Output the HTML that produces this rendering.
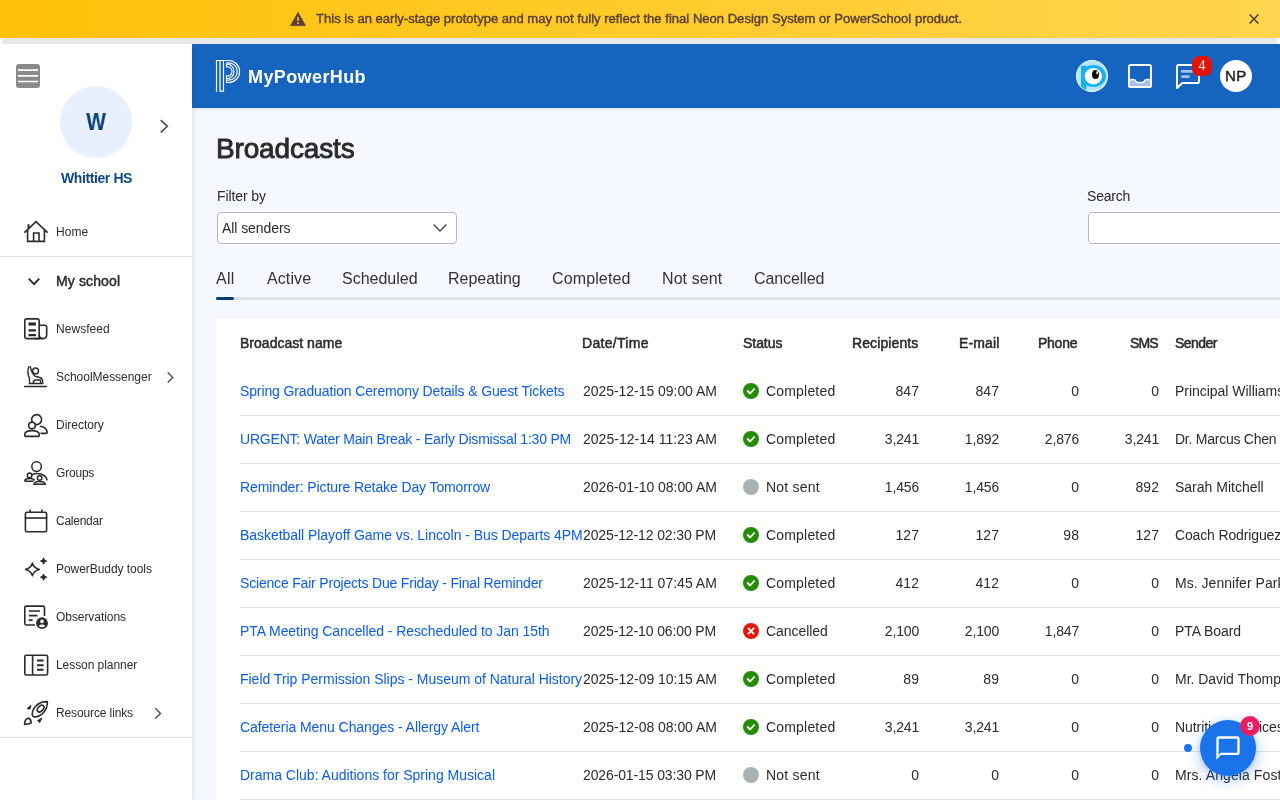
<!DOCTYPE html>
<html lang="en">
<head>
<meta charset="utf-8">
<title>Broadcasts</title>
<style>
*{box-sizing:border-box;margin:0;padding:0}
html,body{width:1280px;height:800px;overflow:hidden}
body{font-family:"Liberation Sans",sans-serif;background:#f5f8fe;color:#2b2b2b;position:relative}
.abs{position:absolute}
.t{position:absolute;white-space:nowrap}
.t,.num,.g{will-change:transform}
#banner{position:absolute;left:0;top:0;width:1280px;height:38px;background:linear-gradient(90deg,#ffc107 0%,#ffd54f 100%);z-index:5}
#bshadow{position:absolute;left:0;top:38px;width:1280px;height:6px;background:linear-gradient(90deg,#fff 0,rgba(255,255,255,0) 5px,rgba(255,255,255,0) 1275px,rgba(255,255,255,.9) 1280px),linear-gradient(180deg,#e4e6ee 0,#e8e8e8 2px,#e9e9e9 100%);z-index:4}
#side{position:absolute;left:0;top:44px;width:192px;height:756px;background:#fff;z-index:3;box-shadow:2px 0 5px rgba(20,40,80,.09)}
.hr{position:absolute;left:0;width:192px;height:1px;background:#dde3e4}
#hdr{position:absolute;left:192px;top:44px;width:1088px;height:64px;background:#1565c0;z-index:2;box-shadow:0 1px 3px rgba(20,40,80,.10)}
#main{position:absolute;left:192px;top:108px;width:1088px;height:692px;background:#f5f8fe}
.field{position:absolute;height:32px;background:#fff;border:1px solid #b2b8bb;border-radius:4px}
#tabline{position:absolute;left:24px;top:189px;width:1064px;height:3px;background:#dde1e3}
#tabact{position:absolute;left:24px;top:189px;width:18px;height:3px;background:#003b7a;border-radius:1.5px}
#card{position:absolute;left:24px;top:211px;width:1064px;height:481px;background:#fff;overflow:hidden}
.sep{position:absolute;left:24px;width:1040px;height:1px;background:#dfe2e4}
.dot{position:absolute;left:527px;width:16px;height:16px}
.num{position:absolute;width:100px;text-align:right;font-size:14px;line-height:18px;color:#2b2b2b;white-space:nowrap}
</style>
</head>
<body>
<div id="banner">
  <svg class="abs" style="left:290px;top:11px" width="16" height="16" viewBox="0 0 16 16"><path d="M8 1.6 L15.4 14.6 H0.6 Z" fill="#5d4037" stroke="#5d4037" stroke-width="0.8" stroke-linejoin="round"/><rect x="7.2" y="6" width="1.6" height="4" fill="#ffc61c"/><rect x="7.2" y="11.2" width="1.6" height="1.7" fill="#ffc61c"/></svg>
  <div class="t" style="left:316px;top:10px;font-size:13px;font-weight:normal;-webkit-text-stroke:0.45px currentColor;line-height:17px;color:#5d4037;letter-spacing:0.027px;">This is an early-stage prototype and may not fully reflect the final Neon Design System or PowerSchool product.</div>
  <svg class="abs" style="left:1248px;top:13px" width="12" height="12" viewBox="0 0 12 12"><path d="M1.6 1.6 L10.4 10.4 M10.4 1.6 L1.6 10.4" stroke="#4a3430" stroke-width="1.4" fill="none"/></svg>
</div>
<div id="bshadow"></div>

<div id="side">
  <svg class="abs" style="left:16px;top:20px" width="24" height="24" viewBox="0 0 24 24"><rect x="0" y="0" width="24" height="24" rx="3" fill="#8a8a8a"/><path d="M2 6.1 H22 M2 11.8 H22 M2 17.5 H22" stroke="#fff" stroke-width="1.7"/></svg>
  <div class="abs" style="left:60px;top:42px;width:72px;height:72px;border-radius:50%;background:#e8f0fe"></div>
  <svg class="abs" style="left:156px;top:72px" width="16" height="20" viewBox="0 0 16 20"><path d="M4.8 4.2 L11.3 10.3 L4.8 16.4" stroke="#454b50" stroke-width="1.6" fill="none"/></svg>
  <div class="hr" style="top:212px"></div>
  <div class="hr" style="top:693px"></div>
  <!-- icons: each svg 28x28 placed at x=22, y = centre-14-44 -->
  <svg class="abs ic" style="left:22px;top:174px" width="28" height="28" viewBox="0 0 28 28" fill="none" stroke="#2b2b2b" stroke-width="1.6"><path d="M2.4 14.6 L14 3.6 L25.6 14.6"/><path d="M5.6 12 V23.4 H22.4 V12"/><path d="M11.6 23.4 V15 H17 V23.4"/><path d="M6.5 10.8 V6.2" stroke-width="2"/></svg>
  <svg class="abs" style="left:26px;top:229px" width="16" height="16" viewBox="0 0 16 16"><path d="M2.7 5.7 L8 11.2 L13.3 5.7" stroke="#2b2b2b" stroke-width="1.9" fill="none"/></svg>
  <svg class="abs ic" style="left:22px;top:271px" width="28" height="28" viewBox="0 0 28 28" fill="none" stroke="#2b2b2b" stroke-width="1.6"><path d="M4.8 3.9 H15.2 Q17.2 3.9 17.2 5.9 V23.6 H4.8 Q2.8 23.6 2.8 21.6 V5.9 Q2.8 3.9 4.8 3.9 Z"/><path d="M17.2 19.6 Q17.2 23.6 21 23.6 Q24.7 23.6 24.7 19.6 V12.3 Q24.7 10.2 22.6 10.2 H17.2"/><path d="M12 23.6 H21"/><path d="M6.5 9 H13.9" stroke-width="3.1"/><path d="M6.5 15.4 H13.9 M6.5 20.1 H13.9" stroke-width="2.1"/></svg>
  <svg class="abs ic" style="left:22px;top:319px" width="28" height="28" viewBox="0 0 28 28" fill="none" stroke="#2b2b2b" stroke-width="1.4"><circle cx="13.6" cy="7.9" r="2.9"/><path d="M7 3.2 Q4.5 9 7.5 15.5 V20.5 H20.7 V18.5 Q20.5 14.8 17 14.2 L13 13.2 Q9.5 10 8.2 3.2"/><path d="M11.2 20.2 Q11.2 17.2 14 17 H18.2 Q18.8 18.6 18.6 20.2"/><path d="M2 23.5 H25" stroke-width="1.5"/></svg>
  <svg class="abs ic" style="left:22px;top:367px" width="28" height="28" viewBox="0 0 28 28" fill="none" stroke="#2b2b2b" stroke-width="1.6"><circle cx="14.6" cy="8.6" r="5"/><path d="M17.8 15.2 Q24.6 16 25.2 21.2 Q25.2 22.4 24 22.4 H18.5"/><circle cx="10" cy="14.6" r="3.3" fill="#fff"/><path d="M2.8 24.6 V23.4 Q3 19.6 10 19.6 Q17 19.6 17.2 23.4 V24.6 Q17.2 25.4 16.4 25.4 H3.6 Q2.8 25.4 2.8 24.6 Z" fill="#fff"/></svg>
  <svg class="abs ic" style="left:22px;top:415px" width="28" height="28" viewBox="0 0 28 28" fill="none" stroke="#2b2b2b" stroke-width="1.5"><circle cx="14.6" cy="7.6" r="4.8"/><path d="M10 15.6 Q14 13.8 18.6 15 Q24.4 16.6 25.2 21.4"/><circle cx="7.6" cy="16.4" r="2.3" fill="#fff"/><path d="M2.6 22.2 Q3 19.6 7.6 19.6 Q11.6 19.6 12.4 21.4 M2.6 22.2 H11.6"/><circle cx="17.6" cy="19" r="2.3" fill="#fff"/><path d="M12 25.2 Q12.4 22.4 17.6 22.4 Q22.8 22.4 23.2 25.2 Z" fill="#fff"/></svg>
  <svg class="abs ic" style="left:22px;top:463px" width="28" height="28" viewBox="0 0 28 28" fill="none" stroke="#2b2b2b" stroke-width="1.6"><rect x="3.4" y="5.2" width="21.2" height="19.6" rx="1.6"/><path d="M3.4 11 H24.6"/><path d="M8.2 2.4 V5.2 M19.8 2.4 V5.2"/></svg>
  <svg class="abs ic" style="left:22px;top:511px" width="28" height="28" viewBox="0 0 28 28" fill="none" stroke="#2b2b2b" stroke-width="1.5" stroke-linejoin="round"><path d="M10.4 8 Q11.6 13 17.4 14.4 Q11.6 15.8 10.4 20.8 Q9.2 15.8 3.4 14.4 Q9.2 13 10.4 8 Z"/><path d="M21.6 2.8 Q22 5.6 24.8 6 Q22 6.4 21.6 9.2 Q21.2 6.4 18.4 6 Q21.2 5.6 21.6 2.8 Z" fill="#2b2b2b" stroke-width="0.9"/><path d="M21.6 19 Q22 21.8 24.8 22.2 Q22 22.6 21.6 25.4 Q21.2 22.6 18.4 22.2 Q21.2 21.8 21.6 19 Z" fill="#2b2b2b" stroke-width="0.9"/></svg>
  <svg class="abs ic" style="left:22px;top:559px" width="28" height="28" viewBox="0 0 28 28" fill="none" stroke="#2b2b2b" stroke-width="1.6"><path d="M13 22 H4.4 Q2.8 22 2.8 20.4 V4.7 Q2.8 3.1 4.4 3.1 H20.9 Q22.5 3.1 22.5 4.7 V13"/><path d="M6.8 8 H18 M6.8 12.6 H15.4 M6.8 17.2 H10.6" stroke-width="1.7"/><circle cx="20" cy="20.2" r="6.9" fill="#fff" stroke="none"/><circle cx="20" cy="20.2" r="5.9" fill="#2b2b2b" stroke="none"/><circle cx="20" cy="18.4" r="1.8" fill="#fff" stroke="none"/><path d="M16.6 23 Q20 20.2 23.4 23 Q20 25.6 16.6 23 Z" fill="#fff" stroke="none"/></svg>
  <svg class="abs ic" style="left:22px;top:607px" width="28" height="28" viewBox="0 0 28 28" fill="none" stroke="#2b2b2b" stroke-width="1.6"><rect x="2.8" y="4.2" width="22.8" height="19.8" rx="1.6"/><path d="M10.6 4.2 V24"/><path d="M15 9.6 H21.6 M15 14.2 H21.6 M15 18.8 H21.6" stroke-width="2"/></svg>
  <svg class="abs ic" style="left:22px;top:655px" width="28" height="28" viewBox="0 0 28 28" fill="none" stroke="#2b2b2b" stroke-width="1.6" stroke-linejoin="round"><path d="M25.4 2.6 Q17.4 2.4 12.8 8.2 Q9.4 12.6 10.6 16.6 Q11 17.4 11.8 17.6 Q16 18.6 20 15.2 Q25.6 10.4 25.4 2.6 Z"/><ellipse cx="18.6" cy="9.6" rx="4" ry="2.5" transform="rotate(-45 18.6 9.6)"/><path d="M2.6 25.4 Q2.6 20 6.6 19 Q9.6 21 9 24 Q6 25.4 2.6 25.4 Z"/><path d="M5 9.6 L9 6.4 L8 10 Z" fill="#2b2b2b" stroke-width="1"/><path d="M15.6 21.6 L20 19 L17.6 23.6 Z" fill="#2b2b2b" stroke-width="1"/></svg>
  <svg class="abs" style="left:162px;top:325px" width="16" height="16" viewBox="0 0 16 16"><path d="M5.7 3.5 L10.7 8.5 L5.7 13.5" stroke="#454b50" stroke-width="1.4" fill="none"/></svg>
  <svg class="abs" style="left:150px;top:661px" width="16" height="16" viewBox="0 0 16 16"><path d="M5.3 3.2 L10.5 8.4 L5.3 13.6" stroke="#454b50" stroke-width="1.4" fill="none"/></svg>

  <div class="t" style="left:56px;top:180px;font-size:12px;font-weight:normal;line-height:16px;color:#2b2b2b;letter-spacing:0.033px;">Home</div>
  <div class="t" style="left:56px;top:277px;font-size:12px;font-weight:normal;line-height:16px;color:#2b2b2b;letter-spacing:0.057px;">Newsfeed</div>
  <div class="t" style="left:56px;top:325px;font-size:12px;font-weight:normal;line-height:16px;color:#2b2b2b;letter-spacing:-0.029px;">SchoolMessenger</div>
  <div class="t" style="left:56px;top:373px;font-size:12px;font-weight:normal;line-height:16px;color:#2b2b2b;letter-spacing:-0.025px;">Directory</div>
  <div class="t" style="left:56px;top:421px;font-size:12px;font-weight:normal;line-height:16px;color:#2b2b2b;letter-spacing:-0.2px;">Groups</div>
  <div class="t" style="left:56px;top:469px;font-size:12px;font-weight:normal;line-height:16px;color:#2b2b2b;letter-spacing:-0.257px;">Calendar</div>
  <div class="t" style="left:56px;top:517px;font-size:12px;font-weight:normal;line-height:16px;color:#2b2b2b;letter-spacing:-0.053px;">PowerBuddy tools</div>
  <div class="t" style="left:56px;top:565px;font-size:12px;font-weight:normal;line-height:16px;color:#2b2b2b;letter-spacing:-0.064px;">Observations</div>
  <div class="t" style="left:56px;top:613px;font-size:12px;font-weight:normal;line-height:16px;color:#2b2b2b;letter-spacing:-0.062px;">Lesson planner</div>
  <div class="t" style="left:56px;top:661px;font-size:12px;font-weight:normal;line-height:16px;color:#2b2b2b;letter-spacing:-0.123px;">Resource links</div>
  <div class="t" style="left:56px;top:228px;font-size:14px;font-weight:normal;-webkit-text-stroke:0.45px currentColor;line-height:18px;color:#2b2b2b;letter-spacing:0.125px;">My school</div>
  <div class="t" style="left:61px;top:125px;font-size:14px;font-weight:bold;line-height:18px;color:#0d4786;letter-spacing:-0.4px;">Whittier HS</div>
  <div class="abs g" style="left:60px;top:63px;width:72px;text-align:center;font-size:24px;line-height:30px;font-weight:bold;color:#0d3f7a;transform:scaleX(.87)">W</div>
</div>

<div id="hdr">
    <svg class="abs" style="left:23px;top:15px" width="26" height="34" viewBox="0 0 26 34" fill="none" stroke="#fff" stroke-width="1.15"><path d="M1.5 32.8 V1.5 H8.5 V32.1 H5 V1.5"/><path d="M8.5 1.5 H13.6 A11 11 0 0 1 13.6 23.5 H11.5 V21.15 H13.6 A8.65 8.65 0 0 0 13.6 3.85 H11.5"/><path d="M11.5 4.9 V7.9 A4.6 4.6 0 1 1 11.5 16.9 V19.9 A7.5 7.5 0 1 0 11.5 4.9 Z"/></svg>
  <svg class="abs" style="left:883px;top:15px" width="34" height="34" viewBox="0 0 34 34"><defs><clipPath id="pbc"><circle cx="17" cy="17" r="15.2"/></clipPath></defs><circle cx="17" cy="17" r="16" fill="#fff"/><circle cx="17" cy="17" r="15.2" fill="#b3e5fc"/><g clip-path="url(#pbc)"><rect x="6" y="6.7" width="5.4" height="26" fill="#16b1ee"/><ellipse cx="18.5" cy="17" rx="12.5" ry="11" fill="#16b1ee"/></g><ellipse cx="18.4" cy="17.2" rx="8.7" ry="8.2" fill="#fff"/><ellipse cx="20.5" cy="15.5" rx="3.5" ry="4.5" fill="#0a0a0a"/><ellipse cx="22.2" cy="13.7" rx="1" ry="1.6" fill="#fff"/></svg>
  <svg class="abs" style="left:935px;top:19px" width="26" height="26" viewBox="0 0 26 26" fill="none"><path d="M2 16.5 H6.5 Q8 16.5 8.6 18 Q9.2 19.5 10.8 19.5 H15.2 Q16.8 19.5 17.4 18 Q18 16.5 19.5 16.5 H24 V23.4 H2 Z" fill="#a5c3ea"/><rect x="2" y="2" width="22" height="22" rx="1.6" stroke="#fff" stroke-width="2"/><path d="M2 16.5 H6.5 Q8 16.5 8.6 18 Q9.2 19.5 10.8 19.5 H15.2 Q16.8 19.5 17.4 18 Q18 16.5 19.5 16.5 H24" stroke="#fff" stroke-width="1.5"/></svg>
  <svg class="abs" style="left:983px;top:19px" width="26" height="27" viewBox="0 0 26 27" fill="none"><path d="M7.2 8.4 H20" stroke="#a5c3ea" stroke-width="2.6" stroke-linecap="round"/><path d="M7.2 13.6 H13.6" stroke="#a5c3ea" stroke-width="2.6" stroke-linecap="round"/><path d="M3.6 2 H22.4 Q24 2 24 3.6 V18.4 Q24 20 22.4 20 H7.4 L2 25 V3.6 Q2 2 3.6 2 Z" stroke="#fff" stroke-width="2" stroke-linejoin="round"/></svg>
  <div class="abs g" style="left:1000px;top:12px;width:20px;height:20px;border-radius:7px;background:#e11507;color:#fff;font-size:14px;line-height:19px;text-align:center;font-family:'Liberation Serif',serif">4</div>
  <div class="abs" style="left:1028px;top:16px;width:32px;height:32px;border-radius:50%;background:#fff"></div>

  <div class="t" style="left:56px;top:22px;font-size:18px;font-weight:bold;line-height:23px;color:#fff;letter-spacing:0.4px;">MyPowerHub</div>
  <div class="t" style="left:1033px;top:22px;font-size:15px;font-weight:normal;-webkit-text-stroke:0.45px currentColor;line-height:20px;color:#222;letter-spacing:0.5px;">NP</div>
</div>

<div id="main">
  <div class="t" style="left:24px;top:23px;font-size:28px;font-weight:normal;-webkit-text-stroke:0.9px currentColor;line-height:36px;color:#2b2b2b;letter-spacing:-0.156px;">Broadcasts</div>
  <div class="t" style="left:25px;top:79px;font-size:14px;font-weight:normal;line-height:18px;color:#2b2b2b;letter-spacing:-0.112px;">Filter by</div>
  <div class="t" style="left:895px;top:79px;font-size:14px;font-weight:normal;line-height:18px;color:#2b2b2b;letter-spacing:-0.2px;">Search</div>
  <div class="t" style="left:30px;top:111px;font-size:14px;font-weight:normal;line-height:18px;color:#2b2b2b;letter-spacing:-0.07px;z-index:2;">All senders</div>
  <div class="t" style="left:24px;top:160px;font-size:16px;font-weight:normal;line-height:21px;color:#333;letter-spacing:0.25px;">All</div>
  <div class="t" style="left:75px;top:160px;font-size:16px;font-weight:normal;line-height:21px;color:#333;letter-spacing:0.1px;">Active</div>
  <div class="t" style="left:150px;top:160px;font-size:16px;font-weight:normal;line-height:21px;color:#333;letter-spacing:0px;">Scheduled</div>
  <div class="t" style="left:256px;top:160px;font-size:16px;font-weight:normal;line-height:21px;color:#333;letter-spacing:-0.031px;">Repeating</div>
  <div class="t" style="left:360px;top:160px;font-size:16px;font-weight:normal;line-height:21px;color:#333;letter-spacing:0.125px;">Completed</div>
  <div class="t" style="left:470px;top:160px;font-size:16px;font-weight:normal;line-height:21px;color:#333;letter-spacing:0.071px;">Not sent</div>
  <div class="t" style="left:562px;top:160px;font-size:16px;font-weight:normal;line-height:21px;color:#333;letter-spacing:-0.094px;">Cancelled</div>
  <div class="field" style="left:25px;top:104px;width:240px"><svg class="abs" style="left:214px;top:10px" width="16" height="10" viewBox="0 0 16 10"><path d="M1.6 1.5 L8 8 L14.4 1.5" stroke="#454b50" stroke-width="1.4" fill="none"/></svg></div>
  <div class="field" style="left:896px;top:104px;width:240px"></div>
  <div id="tabline"></div><div id="tabact"></div>
  <div id="card">
    <div class="t" style="left:24px;top:15px;font-size:14px;font-weight:normal;-webkit-text-stroke:0.5px currentColor;line-height:18px;color:#2b2b2b;letter-spacing:0.019px;">Broadcast name</div>
    <div class="t" style="left:366px;top:15px;font-size:14px;font-weight:normal;-webkit-text-stroke:0.5px currentColor;line-height:18px;color:#2b2b2b;letter-spacing:0.3px;">Date/Time</div>
    <div class="t" style="left:527px;top:15px;font-size:14px;font-weight:normal;-webkit-text-stroke:0.5px currentColor;line-height:18px;color:#2b2b2b;letter-spacing:-0.05px;">Status</div>
    <div class="t" style="left:636px;top:15px;font-size:14px;font-weight:normal;-webkit-text-stroke:0.5px currentColor;line-height:18px;color:#2b2b2b;letter-spacing:0.111px;">Recipients</div>
    <div class="t" style="left:743px;top:15px;font-size:14px;font-weight:normal;-webkit-text-stroke:0.5px currentColor;line-height:18px;color:#2b2b2b;letter-spacing:0.15px;">E-mail</div>
    <div class="t" style="left:822px;top:15px;font-size:14px;font-weight:normal;-webkit-text-stroke:0.5px currentColor;line-height:18px;color:#2b2b2b;letter-spacing:-0.25px;">Phone</div>
    <div class="t" style="left:914px;top:15px;font-size:14px;font-weight:normal;-webkit-text-stroke:0.5px currentColor;line-height:18px;color:#2b2b2b;letter-spacing:-0.875px;">SMS</div>
    <div class="t" style="left:959px;top:15px;font-size:14px;font-weight:normal;-webkit-text-stroke:0.5px currentColor;line-height:18px;color:#2b2b2b;letter-spacing:-0.55px;">Sender</div>
    <div class="sep" style="top:96px"></div>
    <div class="t" style="left:24px;top:63px;font-size:14px;font-weight:normal;line-height:18px;color:#0c5ce5;letter-spacing:-0.128px;">Spring Graduation Ceremony Details &amp; Guest Tickets</div>
    <div class="t" style="left:367px;top:63px;font-size:14px;font-weight:normal;line-height:18px;color:#2b2b2b;letter-spacing:-0.042px;">2025-12-15 09:00 AM</div>
    <svg class="dot" style="top:64px" viewBox="0 0 16 16"><circle cx="8" cy="8" r="8" fill="#268d00"/><path d="M4.2 7.5 L7.1 10.5 L11.6 5.5" stroke="#fff" stroke-width="1.8" fill="none" stroke-linejoin="miter"/></svg>
    <div class="t" style="left:550px;top:63px;font-size:14px;font-weight:normal;line-height:18px;color:#2b2b2b;letter-spacing:0.188px;">Completed</div>
    <div class="num" style="left:603px;top:63px;letter-spacing:0.07px">847</div>
    <div class="num" style="left:683px;top:63px;letter-spacing:0.07px">847</div>
    <div class="num" style="left:763px;top:63px;letter-spacing:0.07px">0</div>
    <div class="num" style="left:843px;top:63px;letter-spacing:0.07px">0</div>
    <div class="t" style="left:959px;top:63px;font-size:14px;font-weight:normal;line-height:18px;color:#2b2b2b;letter-spacing:-0.029px;">Principal Williams</div>
    <div class="sep" style="top:144px"></div>
    <div class="t" style="left:24px;top:111px;font-size:14px;font-weight:normal;line-height:18px;color:#0c5ce5;letter-spacing:-0.199px;">URGENT: Water Main Break - Early Dismissal 1:30 PM</div>
    <div class="t" style="left:367px;top:111px;font-size:14px;font-weight:normal;line-height:18px;color:#2b2b2b;letter-spacing:0.014px;">2025-12-14 11:23 AM</div>
    <svg class="dot" style="top:112px" viewBox="0 0 16 16"><circle cx="8" cy="8" r="8" fill="#268d00"/><path d="M4.2 7.5 L7.1 10.5 L11.6 5.5" stroke="#fff" stroke-width="1.8" fill="none" stroke-linejoin="miter"/></svg>
    <div class="t" style="left:550px;top:111px;font-size:14px;font-weight:normal;line-height:18px;color:#2b2b2b;letter-spacing:0.188px;">Completed</div>
    <div class="num" style="left:603px;top:111px;letter-spacing:-0.17px">3,241</div>
    <div class="num" style="left:683px;top:111px;letter-spacing:-0.17px">1,892</div>
    <div class="num" style="left:763px;top:111px;letter-spacing:-0.17px">2,876</div>
    <div class="num" style="left:843px;top:111px;letter-spacing:-0.17px">3,241</div>
    <div class="t" style="left:959px;top:111px;font-size:14px;font-weight:normal;line-height:18px;color:#2b2b2b;letter-spacing:-0.25px;">Dr. Marcus Chen</div>
    <div class="sep" style="top:192px"></div>
    <div class="t" style="left:24px;top:159px;font-size:14px;font-weight:normal;line-height:18px;color:#0c5ce5;letter-spacing:-0.111px;">Reminder: Picture Retake Day Tomorrow</div>
    <div class="t" style="left:367px;top:159px;font-size:14px;font-weight:normal;line-height:18px;color:#2b2b2b;letter-spacing:-0.042px;">2026-01-10 08:00 AM</div>
    <svg class="dot" style="top:160px" viewBox="0 0 16 16"><circle cx="8" cy="8" r="8" fill="#a9b1b4"/></svg>
    <div class="t" style="left:550px;top:159px;font-size:14px;font-weight:normal;line-height:18px;color:#2b2b2b;letter-spacing:0.214px;">Not sent</div>
    <div class="num" style="left:603px;top:159px;letter-spacing:-0.17px">1,456</div>
    <div class="num" style="left:683px;top:159px;letter-spacing:-0.17px">1,456</div>
    <div class="num" style="left:763px;top:159px;letter-spacing:0.07px">0</div>
    <div class="num" style="left:843px;top:159px;letter-spacing:0.07px">892</div>
    <div class="t" style="left:959px;top:159px;font-size:14px;font-weight:normal;line-height:18px;color:#2b2b2b;letter-spacing:0px;">Sarah Mitchell</div>
    <div class="sep" style="top:240px"></div>
    <div class="t" style="left:24px;top:207px;font-size:14px;font-weight:normal;line-height:18px;color:#0c5ce5;letter-spacing:-0.048px;">Basketball Playoff Game vs. Lincoln - Bus Departs 4PM</div>
    <div class="t" style="left:367px;top:207px;font-size:14px;font-weight:normal;line-height:18px;color:#2b2b2b;letter-spacing:-0.125px;">2025-12-12 02:30 PM</div>
    <svg class="dot" style="top:208px" viewBox="0 0 16 16"><circle cx="8" cy="8" r="8" fill="#268d00"/><path d="M4.2 7.5 L7.1 10.5 L11.6 5.5" stroke="#fff" stroke-width="1.8" fill="none" stroke-linejoin="miter"/></svg>
    <div class="t" style="left:550px;top:207px;font-size:14px;font-weight:normal;line-height:18px;color:#2b2b2b;letter-spacing:0.188px;">Completed</div>
    <div class="num" style="left:603px;top:207px;letter-spacing:0.07px">127</div>
    <div class="num" style="left:683px;top:207px;letter-spacing:0.07px">127</div>
    <div class="num" style="left:763px;top:207px;letter-spacing:0.07px">98</div>
    <div class="num" style="left:843px;top:207px;letter-spacing:0.07px">127</div>
    <div class="t" style="left:959px;top:207px;font-size:14px;font-weight:normal;line-height:18px;color:#2b2b2b;letter-spacing:-0.143px;">Coach Rodriguez</div>
    <div class="sep" style="top:288px"></div>
    <div class="t" style="left:24px;top:255px;font-size:14px;font-weight:normal;line-height:18px;color:#0c5ce5;letter-spacing:-0.188px;">Science Fair Projects Due Friday - Final Reminder</div>
    <div class="t" style="left:367px;top:255px;font-size:14px;font-weight:normal;line-height:18px;color:#2b2b2b;letter-spacing:0.014px;">2025-12-11 07:45 AM</div>
    <svg class="dot" style="top:256px" viewBox="0 0 16 16"><circle cx="8" cy="8" r="8" fill="#268d00"/><path d="M4.2 7.5 L7.1 10.5 L11.6 5.5" stroke="#fff" stroke-width="1.8" fill="none" stroke-linejoin="miter"/></svg>
    <div class="t" style="left:550px;top:255px;font-size:14px;font-weight:normal;line-height:18px;color:#2b2b2b;letter-spacing:0.188px;">Completed</div>
    <div class="num" style="left:603px;top:255px;letter-spacing:0.07px">412</div>
    <div class="num" style="left:683px;top:255px;letter-spacing:0.07px">412</div>
    <div class="num" style="left:763px;top:255px;letter-spacing:0.07px">0</div>
    <div class="num" style="left:843px;top:255px;letter-spacing:0.07px">0</div>
    <div class="t" style="left:959px;top:255px;font-size:14px;font-weight:normal;line-height:18px;color:#2b2b2b;letter-spacing:0.031px;">Ms. Jennifer Park</div>
    <div class="sep" style="top:336px"></div>
    <div class="t" style="left:24px;top:303px;font-size:14px;font-weight:normal;line-height:18px;color:#0c5ce5;letter-spacing:-0.065px;">PTA Meeting Cancelled - Rescheduled to Jan 15th</div>
    <div class="t" style="left:367px;top:303px;font-size:14px;font-weight:normal;line-height:18px;color:#2b2b2b;letter-spacing:-0.125px;">2025-12-10 06:00 PM</div>
    <svg class="dot" style="top:304px" viewBox="0 0 16 16"><circle cx="8" cy="8" r="8" fill="#e3170a"/><path d="M4.9 4.9 L11.1 11.1 M11.1 4.9 L4.9 11.1" stroke="#fff" stroke-width="1.8" fill="none"/></svg>
    <div class="t" style="left:550px;top:303px;font-size:14px;font-weight:normal;line-height:18px;color:#2b2b2b;letter-spacing:-0.062px;">Cancelled</div>
    <div class="num" style="left:603px;top:303px;letter-spacing:-0.17px">2,100</div>
    <div class="num" style="left:683px;top:303px;letter-spacing:-0.17px">2,100</div>
    <div class="num" style="left:763px;top:303px;letter-spacing:-0.17px">1,847</div>
    <div class="num" style="left:843px;top:303px;letter-spacing:0.07px">0</div>
    <div class="t" style="left:959px;top:303px;font-size:14px;font-weight:normal;line-height:18px;color:#2b2b2b;letter-spacing:-0.075px;">PTA Board</div>
    <div class="sep" style="top:384px"></div>
    <div class="t" style="left:24px;top:351px;font-size:14px;font-weight:normal;line-height:18px;color:#0c5ce5;letter-spacing:-0.019px;">Field Trip Permission Slips - Museum of Natural History</div>
    <div class="t" style="left:367px;top:351px;font-size:14px;font-weight:normal;line-height:18px;color:#2b2b2b;letter-spacing:-0.042px;">2025-12-09 10:15 AM</div>
    <svg class="dot" style="top:352px" viewBox="0 0 16 16"><circle cx="8" cy="8" r="8" fill="#268d00"/><path d="M4.2 7.5 L7.1 10.5 L11.6 5.5" stroke="#fff" stroke-width="1.8" fill="none" stroke-linejoin="miter"/></svg>
    <div class="t" style="left:550px;top:351px;font-size:14px;font-weight:normal;line-height:18px;color:#2b2b2b;letter-spacing:0.188px;">Completed</div>
    <div class="num" style="left:603px;top:351px;letter-spacing:0.07px">89</div>
    <div class="num" style="left:683px;top:351px;letter-spacing:0.07px">89</div>
    <div class="num" style="left:763px;top:351px;letter-spacing:0.07px">0</div>
    <div class="num" style="left:843px;top:351px;letter-spacing:0.07px">0</div>
    <div class="t" style="left:959px;top:351px;font-size:14px;font-weight:normal;line-height:18px;color:#2b2b2b;letter-spacing:-0.029px;">Mr. David Thompson</div>
    <div class="sep" style="top:432px"></div>
    <div class="t" style="left:24px;top:399px;font-size:14px;font-weight:normal;line-height:18px;color:#0c5ce5;letter-spacing:-0.068px;">Cafeteria Menu Changes - Allergy Alert</div>
    <div class="t" style="left:367px;top:399px;font-size:14px;font-weight:normal;line-height:18px;color:#2b2b2b;letter-spacing:-0.042px;">2025-12-08 08:00 AM</div>
    <svg class="dot" style="top:400px" viewBox="0 0 16 16"><circle cx="8" cy="8" r="8" fill="#268d00"/><path d="M4.2 7.5 L7.1 10.5 L11.6 5.5" stroke="#fff" stroke-width="1.8" fill="none" stroke-linejoin="miter"/></svg>
    <div class="t" style="left:550px;top:399px;font-size:14px;font-weight:normal;line-height:18px;color:#2b2b2b;letter-spacing:0.188px;">Completed</div>
    <div class="num" style="left:603px;top:399px;letter-spacing:-0.17px">3,241</div>
    <div class="num" style="left:683px;top:399px;letter-spacing:-0.17px">3,241</div>
    <div class="num" style="left:763px;top:399px;letter-spacing:0.07px">0</div>
    <div class="num" style="left:843px;top:399px;letter-spacing:0.07px">0</div>
    <div class="t" style="left:959px;top:399px;font-size:14px;font-weight:normal;line-height:18px;color:#2b2b2b;letter-spacing:-0.059px;">Nutrition Services</div>
    <div class="sep" style="top:480px"></div>
    <div class="t" style="left:24px;top:447px;font-size:14px;font-weight:normal;line-height:18px;color:#0c5ce5;letter-spacing:-0.006px;">Drama Club: Auditions for Spring Musical</div>
    <div class="t" style="left:367px;top:447px;font-size:14px;font-weight:normal;line-height:18px;color:#2b2b2b;letter-spacing:-0.125px;">2026-01-15 03:30 PM</div>
    <svg class="dot" style="top:448px" viewBox="0 0 16 16"><circle cx="8" cy="8" r="8" fill="#a9b1b4"/></svg>
    <div class="t" style="left:550px;top:447px;font-size:14px;font-weight:normal;line-height:18px;color:#2b2b2b;letter-spacing:0.214px;">Not sent</div>
    <div class="num" style="left:603px;top:447px;letter-spacing:0.07px">0</div>
    <div class="num" style="left:683px;top:447px;letter-spacing:0.07px">0</div>
    <div class="num" style="left:763px;top:447px;letter-spacing:0.07px">0</div>
    <div class="num" style="left:843px;top:447px;letter-spacing:0.07px">0</div>
    <div class="t" style="left:959px;top:447px;font-size:14px;font-weight:normal;line-height:18px;color:#2b2b2b;letter-spacing:0.088px;">Mrs. Angela Foster</div>
  </div>
</div>

<!-- floating chat button -->
<div class="abs" style="left:1184px;top:744px;width:8px;height:8px;border-radius:50%;background:#1a73e8;z-index:9"></div>
<div class="abs" style="left:1200px;top:720px;width:56px;height:56px;border-radius:50%;background:#1a73e8;box-shadow:0 4px 14px rgba(26,115,232,.42),0 1px 4px rgba(0,0,0,.10);z-index:9">
  <svg class="abs" style="left:14px;top:14px" width="28" height="28" viewBox="0 0 24 24"><path fill="#fff" d="M20 2H4c-1.1 0-2 .9-2 2v18l4-4h14c1.1 0 2-.9 2-2V4c0-1.1-.9-2-2-2zm0 14H6l-2 2V4h16v12z"/></svg>
</div>
<div class="abs g" style="left:1240px;top:716px;width:20px;height:20px;border-radius:50%;background:#e91e63;color:#fff;font-size:11px;font-weight:bold;line-height:20px;text-align:center;z-index:10">9</div>
</body>
</html>
